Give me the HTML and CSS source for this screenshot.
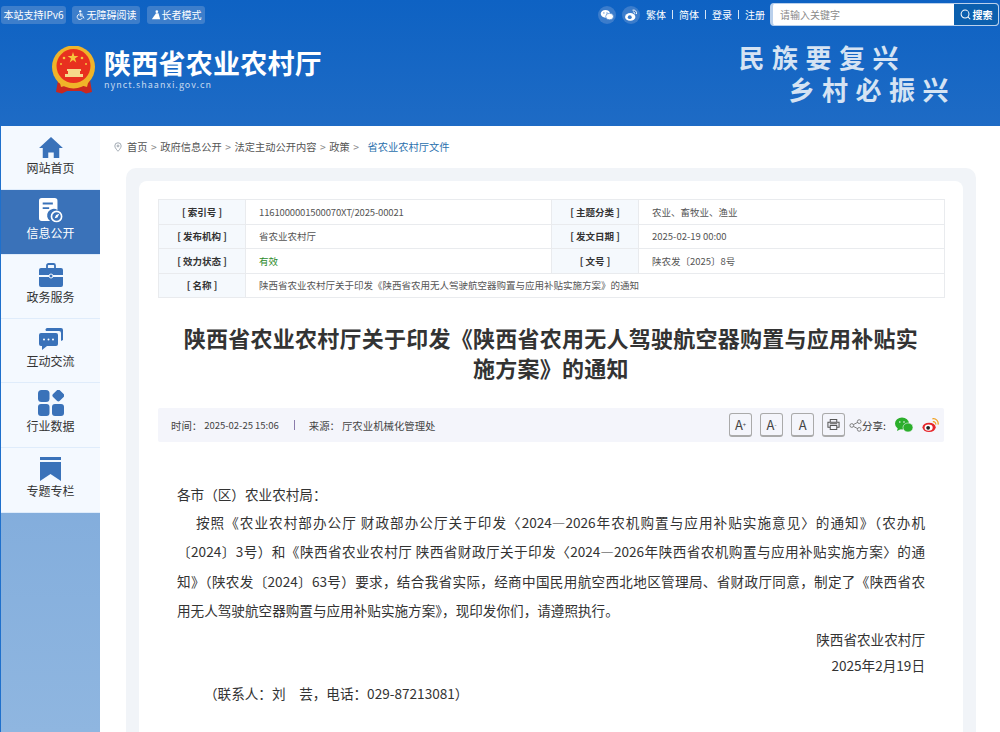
FILE: index.html
```html
<!DOCTYPE html>
<html lang="zh-CN">
<head>
    <meta charset="UTF-8">
    <title>陕西省农业农村厅</title>
    <link rel="stylesheet" href="styles.css">
</head>
<body>
    <!-- 顶部 -->
    <header class="header">
        <div class="topbar">
            <div class="top-tags">
                <span class="tag tag-ipv6">本站支持IPv6</span>
                <span class="tag tag-access">
                    <svg class="tag-icon" viewBox="0 0 12 12"><circle cx="5" cy="1.6" r="1.4" fill="#fff"/><path d="M5 3.5v3.6h3.2l1.4 3M5 5h3M3.6 5.2a3.2 3.2 0 1 0 4 4.2" fill="none" stroke="#fff" stroke-width="1.1"/></svg>
                    无障碍阅读
                </span>
                <span class="tag tag-old">
                    <svg class="tag-icon" viewBox="0 0 12 12"><circle cx="7" cy="2" r="1.6" fill="#fff"/><path d="M6 4h3l2 7H1z" fill="#fff"/></svg>
                    长者模式
                </span>
            </div>
            <div class="top-right">
                <span class="round-icon">
                    <svg viewBox="0 0 18 18" width="14" height="14"><ellipse cx="7" cy="7.5" rx="6" ry="5" fill="#fff"/><ellipse cx="12.3" cy="11" rx="5" ry="4.2" fill="#fff" stroke="#3b7ccb" stroke-width=".8"/><circle cx="5" cy="6.3" r=".8" fill="#3b7ccb"/><circle cx="9" cy="6.3" r=".8" fill="#3b7ccb"/></svg>
                </span>
                <span class="round-icon">
                    <svg viewBox="0 0 18 18" width="14" height="14"><ellipse cx="8" cy="11.5" rx="6.6" ry="5" fill="#fff"/><circle cx="7.4" cy="11.8" r="2.5" fill="#3b7ccb"/><path d="M11 2.8a4 4 0 0 1 5 5M11.5 5.3a1.8 1.8 0 0 1 2.3 2.3" fill="none" stroke="#fff" stroke-width="1.2"/></svg>
                </span>
                <nav class="top-links">
                    <a>繁体</a><i></i><a>简体</a><i></i><a>登录</a><i></i><a>注册</a>
                </nav>
                <div class="search">
                    <span class="search-input">请输入关键字</span>
                    <span class="search-btn">
                        <svg viewBox="0 0 12 12" width="11" height="11"><circle cx="5.5" cy="5.5" r="4.3" fill="none" stroke="#fff" stroke-width="1.1"/><path d="M8.7 8.7l2.5 2.5" stroke="#fff" stroke-width="1.1"/></svg>
                        搜索
                    </span>
                </div>
            </div>
        </div>
        <div class="brand-row">
            <div class="brand">
                <svg class="emblem" viewBox="0 0 46 48">
                    <path d="M7 34L5 46l6 1.5 5-2.500h14l5 2.500 6-1.500-2-12z" fill="#c9271f"/>
                    <circle cx="22.500" cy="21" r="21.500" fill="#f0b429"/>
                    <circle cx="22.500" cy="20" r="17" fill="#e8301f"/>
                    <polygon points="22,6 23.3,10 27.4,10 24,12.4 25.3,16.4 22,14 18.7,16.4 20,12.4 16.6,10 20.7,10" fill="#f6c63c"/>
                    <circle cx="13" cy="12" r="1.300" fill="#f6c63c"/>
                    <circle cx="31" cy="12" r="1.300" fill="#f6c63c"/>
                    <circle cx="10" cy="18" r="1" fill="#f6c63c"/>
                    <circle cx="35" cy="18" r="1" fill="#f6c63c"/>
                    <path d="M16 23h14v2h-1v3h3v3H14v-3h3v-3h-1z" fill="#f6d98a"/>
                    <path d="M8 33c5 6 10 6 15 4 5 2 10 2 15-4l-2 8-7-2-6 2-6-2-7 2z" fill="#f0b429"/>
                </svg>
                <div class="brand-text">
                    <div class="brand-name">陕西省农业农村厅</div>
                    <div class="brand-url">nynct.shaanxi.gov.cn</div>
                </div>
            </div>
            <div class="slogan">
                <div>民族要复兴</div>
                <div class="slogan-two">乡村必振兴</div>
            </div>
        </div>
    </header>

    <div class="page">
        <!-- 左侧导航 -->
        <aside class="side">
            <ul class="side-nav">
                <li>
                    <svg viewBox="0 0 28 24" width="26" height="22"><path d="M14 1L1 13h4v11h6v-6h6v6h6V13h4z" fill="#3a72b9"/></svg>
                    <span>网站首页</span>
                </li>
                <li class="active">
                    <svg viewBox="0 0 26 28" width="24" height="26"><path d="M3 1h14a3 3 0 0 1 3 3v10a7 7 0 0 0-8 12H3a3 3 0 0 1-3-3V4a3 3 0 0 1 3-3z" fill="#fff"/><path d="M4 7h11M4 12h7" stroke="#3a72b9" stroke-width="2"/><circle cx="19" cy="21" r="5.5" fill="none" stroke="#fff" stroke-width="1.8"/><path d="M22 18l-2 4-3 1 1.5-3.500z" fill="#fff"/></svg>
                    <span>信息公开</span>
                </li>
                <li>
                    <svg viewBox="0 0 24 24" width="24" height="24"><path d="M8 5V2.500A1.500 1.500 0 0 1 9.500 1h5A1.500 1.500 0 0 1 16 2.500V5" fill="none" stroke="#3a72b9" stroke-width="1.800"/><path d="M2 5h20a2 2 0 0 1 2 2v5H0V7a2 2 0 0 1 2-2zM0 14h24v8a2 2 0 0 1-2 2H2a2 2 0 0 1-2-2z" fill="#3a72b9"/><circle cx="12" cy="13" r="2" fill="#3a72b9" stroke="#f4f9ff"/></svg>
                    <span>政务服务</span>
                </li>
                <li>
                    <svg viewBox="0 0 26 24" width="26" height="24"><path d="M9 1h14a2 2 0 0 1 2 2v10l-2 1V6a2 2 0 0 0-2-2H8a2 2 0 0 1 1-3z" fill="#3a72b9"/><path d="M3 6h15a2 2 0 0 1 2 2v9a2 2 0 0 1-2 2H9l-5 4v-4H3a2 2 0 0 1-2-2V8a2 2 0 0 1 2-2z" fill="#3a72b9"/><circle cx="6" cy="12.5" r="1" fill="#fff"/><circle cx="10.5" cy="12.5" r="1" fill="#fff"/><circle cx="15" cy="12.5" r="1" fill="#fff"/></svg>
                    <span>互动交流</span>
                </li>
                <li class="side-tall">
                    <svg viewBox="0 0 26 26" width="26" height="26"><rect x="0" y="0" width="11.5" height="12" rx="3.5" fill="#3a72b9"/><rect x="15.500" y="0.500" width="9.500" height="9.500" rx="2" transform="rotate(45 20 5.500)" fill="#3a72b9"/><rect x="0" y="14" width="11.5" height="12" rx="3" fill="#3a72b9"/><rect x="14" y="14" width="12" height="12" rx="3" fill="#3a72b9"/></svg>
                    <span>行业数据</span>
                </li>
                <li>
                    <svg viewBox="0 0 22 24" width="22" height="24"><rect x="0" y="0" width="21" height="3" fill="#3a72b9"/><path d="M0 5h21v19l-10.500-7L0 24z" fill="#3a72b9"/></svg>
                    <span>专题专栏</span>
                </li>
            </ul>
        </aside>

        <main class="main">
            <!-- 面包屑 -->
            <div class="crumbs">
                <svg viewBox="0 0 10 12" width="8" height="10"><path d="M5 .7a4 4 0 0 1 4 4c0 2.600-4 6.600-4 6.600s-4-4-4-6.600a4 4 0 0 1 4-4z" fill="none" stroke="#8a94a0"/><circle cx="5" cy="4.700" r="1.200" fill="none" stroke="#8a94a0"/></svg>
                <a>首页</a><b>&gt;</b><a>政府信息公开</a><b>&gt;</b><a>法定主动公开内容</a><b>&gt;</b><a>政策</a><b>&gt;</b><a class="crumb-now">省农业农村厅文件</a>
            </div>

            <div class="card">
                <div class="card-inner">
                    <!-- 信息表 -->
                    <table class="info">
                        <tr>
                            <th>[ 索引号 ]</th><td class="num">1161000001500070XT/2025-00021</td>
                            <th>[ 主题分类 ]</th><td>农业、畜牧业、渔业</td>
                        </tr>
                        <tr>
                            <th>[ 发布机构 ]</th><td>省农业农村厅</td>
                            <th>[ 发文日期 ]</th><td>2025-02-19 00:00</td>
                        </tr>
                        <tr>
                            <th>[ 效力状态 ]</th><td class="valid">有效</td>
                            <th>[ 文号 ]</th><td>陕农发〔2025〕8号</td>
                        </tr>
                        <tr>
                            <th>[ 名称 ]</th>
                            <td colspan="3">陕西省农业农村厅关于印发《陕西省农用无人驾驶航空器购置与应用补贴实施方案》的通知</td>
                        </tr>
                    </table>

                    <h1 class="title">陕西省农业农村厅关于印发《陕西省农用无人驾驶航空器购置与应用补贴实施方案》的通知</h1>

                    <!-- 时间来源 -->
                    <div class="meta">
                        <div class="meta-left">
                            <span>时间：</span><span class="meta-date">2025-02-25 15:06</span>
                            <i></i>
                            <span>来源：</span><span class="meta-from">厅农业机械化管理处</span>
                        </div>
                        <div class="meta-right">
                            <span class="font-btn">A<sup>+</sup></span>
                            <span class="font-btn">A<sup>-</sup></span>
                            <span class="font-btn">A</span>
                            <span class="font-btn">
                                <svg viewBox="0 0 14 14" width="13" height="13"><path d="M3.5 4V1.500h7V4M3.500 10H1V4.500h12V10h-2.500M3.500 8h7v4.500h-7zM3 6.300h8" fill="none" stroke="#555" stroke-width="1.100"/></svg>
                            </span>
                            <svg class="share-icon" viewBox="0 0 14 14" width="13" height="13"><circle cx="3" cy="7" r="2" fill="none" stroke="#777"/><circle cx="11" cy="2.800" r="2" fill="none" stroke="#777"/><circle cx="11" cy="11.200" r="2" fill="none" stroke="#777"/><path d="M4.800 6l4.400-2.300M4.800 8l4.400 2.300" stroke="#777"/></svg>
                            <span class="share-text">分享:</span>
                            <svg class="share-wx" viewBox="0 0 18 16" width="18" height="16"><ellipse cx="7" cy="6.500" rx="7" ry="6" fill="#2bae2b"/><path d="M3 10l-1 4 4-2z" fill="#2bae2b"/><ellipse cx="13" cy="10.500" rx="5" ry="4.500" fill="#2bae2b" stroke="#f4f5fb" stroke-width=".6"/><circle cx="4.800" cy="5" r=".8" fill="#f4f5fb"/><circle cx="9" cy="5" r=".8" fill="#f4f5fb"/></svg>
                            <svg class="share-wb" viewBox="0 0 18 16" width="17" height="16"><ellipse cx="7.500" cy="10.500" rx="7" ry="5" fill="#e6262b"/><ellipse cx="7" cy="10.800" rx="4.300" ry="3.200" fill="#fff"/><circle cx="6.500" cy="11" r="2" fill="#222"/><path d="M11 1.500a5 5 0 0 1 6 6M11.500 4.500a2.500 2.500 0 0 1 3 3" fill="none" stroke="#f0a020" stroke-width="1.300"/></svg>
                        </div>
                    </div>

                    <!-- 正文 -->
                    <div class="article">
                        <p class="no-indent">各市（区）农业农村局：</p>
                        <p class="body-lines"><span class="first-line">按照《农业农村部办公厅 财政部办公厅关于印发〈2024—2026年农机购置与应用补贴实施意见〉的通知》（农办机</span><br>〔2024〕3号）和《陕西省农业农村厅 陕西省财政厅关于印发〈2024—2026年陕西省农机购置与应用补贴实施方案〉的通<br>知》（陕农发〔2024〕63号）要求，结合我省实际，经商中国民用航空西北地区管理局、省财政厅同意，制定了《陕西省农</p>
                        <p class="no-indent">用无人驾驶航空器购置与应用补贴实施方案》，现印发你们，请遵照执行。</p>
                        <p class="sign">陕西省农业农村厅</p>
                        <p class="sign sign-date">2025年2月19日</p>
                        <p class="contact">（联系人：刘&emsp;芸，电话：029-87213081）</p>
                    </div>
                </div>
            </div>
        </main>
    </div>
</body>
</html>
```

FILE: styles.css
```css
/* 基础 */
* {
    box-sizing: border-box;
}

html, body {
    height: 732px;
    overflow: hidden;
}

body {
    margin: 0;
    background: #fff;
    color: #333;
    font-family: "Noto Sans CJK SC", "Liberation Sans", sans-serif;
    font-size: 12px;
}

/* 顶部 */
.header {
    height: 126px;
    background: linear-gradient(180deg, #0e62c3 0%, #1e6bc5 100%);
    color: #fff;
}

.topbar {
    display: flex;
    justify-content: space-between;
    align-items: center;
    height: 29px;
    padding: 0 1px;
}

.top-tags {
    display: flex;
    gap: 6px;
}

.tag {
    display: flex;
    align-items: center;
    justify-content: center;
    gap: 1px;
    height: 18px;
    border-radius: 3px;
    background: #3d7ecb;
    font-size: 10px;
    white-space: nowrap;
}

.tag-ipv6 { width: 65px; }
.tag-access { width: 68px; }
.tag-old { width: 58px; margin-left: 1px; }

.tag-icon {
    width: 10px;
    height: 10px;
}

.top-right {
    display: flex;
    align-items: center;
}

.round-icon {
    display: flex;
    align-items: center;
    justify-content: center;
    width: 18px;
    height: 18px;
    margin-right: 6px;
    border-radius: 50%;
    background: #3b7ccb;
}

.top-links {
    display: flex;
    align-items: center;
    margin-right: 5px;
    font-size: 10px;
}

.top-links i {
    width: 1px;
    height: 9px;
    margin: 0 6px;
    background: #d5e4f5;
}

.search {
    display: flex;
    width: 229px;
    height: 23px;
    border: 1px solid #b9d0ec;
    border-left-width: 3px;
    border-radius: 4px;
    background: #fff;
}

.search-input {
    flex: 1;
    padding-left: 7px;
    color: #8a8a8a;
    font-size: 10px;
    line-height: 21px;
}

.search-btn {
    display: flex;
    align-items: center;
    justify-content: center;
    gap: 2px;
    width: 44px;
    border-radius: 0 3px 3px 0;
    background: #0b5fae;
    color: #fff;
    font-size: 10px;
    font-weight: 700;
}

.brand-row {
    display: flex;
    justify-content: space-between;
    padding: 17px 44px 0 51px;
}

.brand {
    display: flex;
    align-items: flex-start;
}

.emblem {
    width: 46px;
    height: 48px;
    flex: none;
}

.brand-text {
    margin-left: 7px;
}

.brand-name {
    font-size: 27px;
    font-weight: 700;
    line-height: 33px;
    letter-spacing: .25px;
}

.brand-url {
    color: #c4d8ef;
    font-size: 9px;
    line-height: 12px;
    letter-spacing: 1px;
}

.slogan {
    margin-top: -5px;
    color: #d5e3f3;
    font-size: 26px;
    font-weight: 700;
    line-height: 32px;
    letter-spacing: 7.500px;
}

.slogan-two {
    margin-left: 50px;
}

/* 主体 */
.page {
    display: flex;
    height: 606px;
}

.side {
    width: 100px;
    flex: none;
    border-left: 1px solid #1f70cc;
    background: linear-gradient(180deg, #6f9fd6 0%, #8fb6e0 100%);
}

.side-nav {
    margin: 0;
    padding: 0;
    list-style: none;
}

.side-nav li {
    display: flex;
    flex-direction: column;
    align-items: center;
    justify-content: flex-end;
    height: 64.300px;
    padding-bottom: 13px;
    border-bottom: 1px solid #dfecfb;
    background: #f4f9ff;
    color: #333;
}

.side-nav li.side-tall {
    height: 65.300px;
}

.side-nav li svg {
    margin-bottom: 2px;
}

.side-nav li span {
    line-height: 16px;
}

.side-nav li.active {
    background: #3a72b9;
    color: #fff;
}

.main {
    flex: 1;
    padding-left: 14px;
}

.crumbs {
    display: flex;
    align-items: center;
    height: 41px;
    margin-bottom: 1px;
    color: #555;
    font-size: 10.250px;
    white-space: nowrap;
}

.crumbs svg {
    margin-right: 5px;
}

.crumbs b {
    margin: 0 3.500px;
    color: #888;
    font-weight: 400;
}

.crumb-now {
    margin-left: 5px;
    color: #2a6fad;
}

.card {
    width: 850px;
    margin-left: 12px;
    padding: 13px 13px 0;
    border-radius: 10px 10px 0 0;
    background: #f1f4f8;
    height: 564px;
}

.card-inner {
    height: 551px;
    padding: 18px 19px 0;
    border-radius: 8px 8px 0 0;
    background: #fff;
}

/* 信息表 */
.info {
    width: 785px;
    border-collapse: collapse;
    table-layout: fixed;
    font-size: 9.500px;
}

.info th, .info td {
    height: 24.500px;
    padding: 0;
    border: 1px solid #e9ebee;
}

.info th {
    width: 87px;
    background: #f5f9fd;
    color: #333;
    font-weight: 700;
    text-align: center;
}

.info td {
    width: 306px;
    padding-left: 13px;
    color: #555;
}

.info .num {
    letter-spacing: -.14px;
}

.valid {
    color: #2b8a2b !important;
}

.title {
    margin: 24px 0 0;
    padding: 0 20px;
    color: #333;
    font-size: 22px;
    font-weight: 700;
    line-height: 30px;
    letter-spacing: .25px;
    text-align: center;
}

/* 时间来源 */
.meta {
    display: flex;
    justify-content: space-between;
    align-items: center;
    height: 34px;
    margin-top: 26px;
    padding: 0 5px 0 13px;
    border-radius: 2px;
    background: #f4f5fb;
    font-size: 10.400px;
    color: #444;
}

.meta-left, .meta-right {
    display: flex;
    align-items: center;
}

.meta-date {
    margin-left: 2px;
    font-size: 9.500px;
}

.meta-left i {
    width: 1px;
    height: 10px;
    margin: 0 14px 0 15px;
    background: #8a7cab;
}

.meta-from {
    margin-left: 2px;
}

.font-btn {
    display: flex;
    align-items: center;
    justify-content: center;
    width: 23px;
    height: 24px;
    margin-right: 8px;
    border: 1px solid #aaa;
    border-bottom-width: 2px;
    border-radius: 3px;
    color: #444;
    font-size: 13px;
}

.font-btn sup {
    font-size: 6px;
    line-height: 1;
}

.share-icon {
    margin-left: -4px;
}

.share-text {
    color: #333;
    font-size: 10.500px;
}

.share-wx {
    margin-left: 9px;
}

.share-wb {
    margin-left: 9px;
}

/* 正文 */
.article {
    padding: 38px 19px 0;
    color: #333;
    font-size: 13.600px;
    line-height: 29.500px;
}

.article p {
    margin: 0;
}

.article .no-indent {
    margin-bottom: -1.600px;
}

.article .body-lines {
    text-align: justify;
    text-align-last: justify;
}

.body-lines .first-line {
    margin-left: 19px;
}

.article .body-lines + .no-indent {
    margin-bottom: 0;
}

.article .sign {
    text-align: right;
    line-height: 27px;
}

.article .sign-date {
    line-height: 25px;
}

.article .contact {
    margin-top: 1px;
    padding-left: 27px;
}
```
